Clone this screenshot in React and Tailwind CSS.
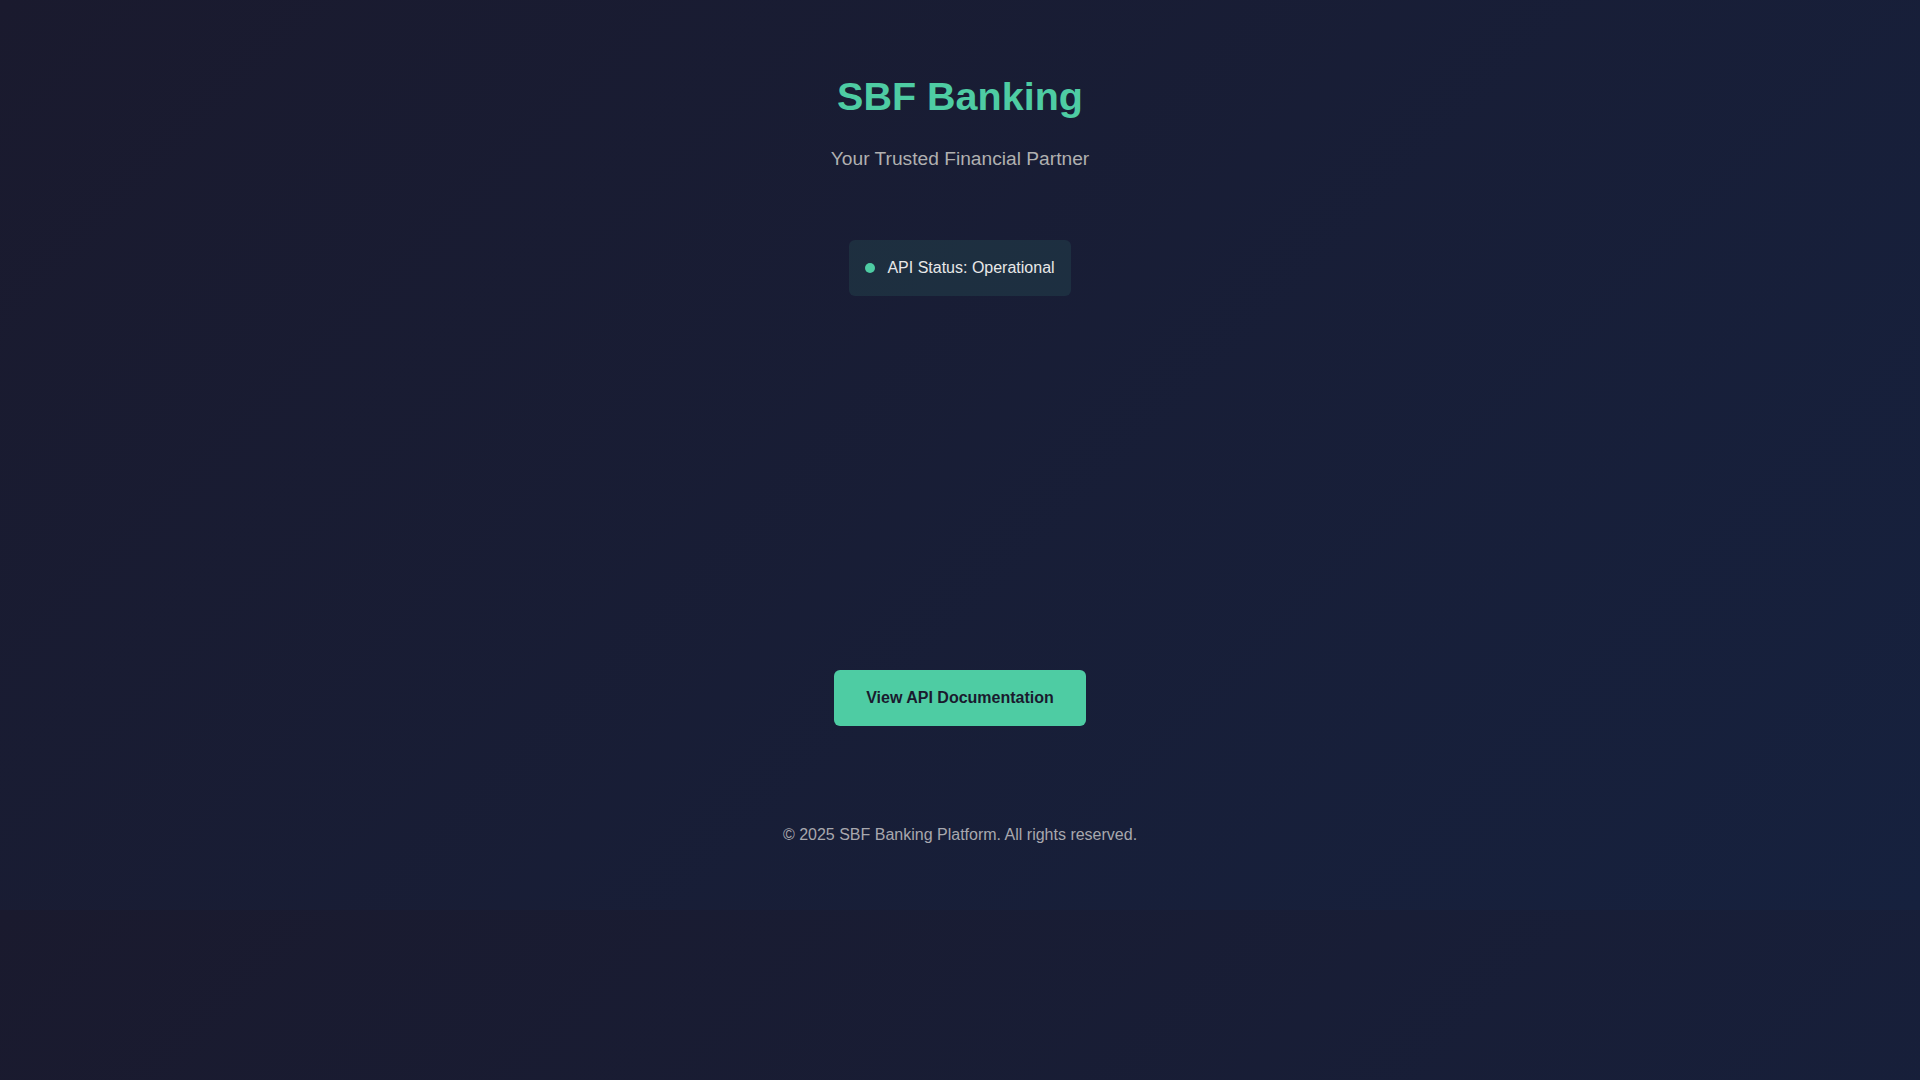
import React from 'react';

export default function App() {
  return (
    <div className="min-h-screen bg-[linear-gradient(135deg,#1a1a2e_0%,#16213e_100%)] bg-[length:100%_910px] font-['Liberation_Sans',Arial,sans-serif]">
      <div className="flex flex-col items-center pt-[72px] pb-[64px]">
        {/* Header */}
        <h1 className="text-[39.5px] leading-[48px] font-bold text-[#4ecca3]">SBF Banking</h1>
        <p className="mt-[25px] text-[19.2px] leading-[27px] text-[#b0b0b0]">Your Trusted Financial Partner</p>

        {/* Status */}
        <div className="mt-[68px] flex items-center gap-3 rounded-[6px] bg-[#4ecca3]/10 px-4 py-4">
          <span className="h-2.5 w-2.5 rounded-full bg-[#4ecca3]" />
          <span className="text-base leading-6 text-[#e8e8e8]">API Status: Operational</span>
        </div>

        {/* Action */}
        <button className="mt-[374px] rounded-[6px] bg-[#4ecca3] px-8 py-4 text-base leading-6 font-bold text-[#1a1a2e]">
          View API Documentation
        </button>

        {/* Footer */}
        <footer className="mt-[97px] text-base leading-6 text-[#a8a8ae]">
          © 2025 SBF Banking Platform. All rights reserved.
        </footer>
      </div>
    </div>
  );
}
